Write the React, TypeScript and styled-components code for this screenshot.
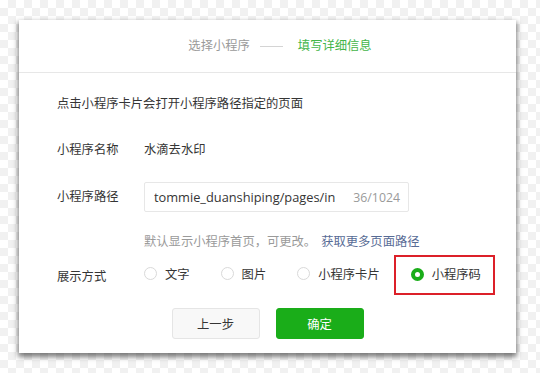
import React from 'react';
import styled, { createGlobalStyle } from 'styled-components';

const GlobalStyle = createGlobalStyle`
  html, body {
    margin: 0;
    padding: 0;
  }
  body {
    width: 540px;
    height: 373px;
    overflow: hidden;
    background-color: #ffffff;
    background-image: repeating-conic-gradient(#f1f1f1 0% 25%, #ffffff 0% 50%);
    background-size: 16px 16px;
    font-family: "Open Sans", "Noto Sans CJK SC", sans-serif;
    font-size: 12.3px;
    color: #353535;
  }
`;

const Dialog = styled.div`
  width: 497px;
  height: 333px;
  margin: 20px 0 0 19px;
  background: #ffffff;
  box-shadow: 0 3px 5px 1px rgba(0, 0, 0, 0.5);
  display: flex;
  flex-direction: column;
`;

const Steps = styled.div`
  height: 52px;
  border-bottom: 1px solid #e7e7e7;
  display: flex;
  align-items: center;
  justify-content: center;
  padding-left: 25px;
`;

const Step = styled.span<{ $active?: boolean }>`
  color: ${(p) => (p.$active ? '#44b549' : '#9a9a9a')};
  line-height: 20px;
`;

const StepLine = styled.span`
  width: 23px;
  height: 1px;
  background: #d4d4d4;
  margin: 1px 15px 0 10px;
`;

const Body = styled.div`
  padding: 21px 0 0 38px;
  display: flex;
  flex-direction: column;
`;

const Intro = styled.div`
  line-height: 20px;
`;

const Row = styled.div<{ $top: number }>`
  display: flex;
  align-items: center;
  margin-top: ${(p) => p.$top}px;
`;

const Label = styled.div`
  width: 87px;
  flex-shrink: 0;
  line-height: 20px;
`;

const Value = styled.div`
  line-height: 20px;
`;

const InputBox = styled.div`
  width: 246px;
  height: 28px;
  border: 1px solid #e7e7e7;
  border-radius: 2px;
  display: flex;
  align-items: center;
  padding: 0 8px 0 9px;
`;

const PathInput = styled.input`
  width: 181px;
  border: none;
  outline: none;
  padding: 0;
  font: inherit;
  font-size: 12.8px;
  color: #353535;
  background: transparent;
`;

const Counter = styled.span`
  margin-left: auto;
  color: #9a9a9a;
`;

const Hint = styled.div`
  margin: 20px 0 0 87px;
  line-height: 20px;
  color: #9a9a9a;
`;

const Link = styled.a`
  color: #576b95;
  text-decoration: none;
  margin-left: 5px;
`;

const Options = styled.div`
  display: flex;
  align-items: center;
  gap: 31px;
`;

const Option = styled.label<{ $marked?: boolean }>`
  position: relative;
  display: flex;
  align-items: center;
  gap: 8px;
  line-height: 20px;

  ${(p) =>
    p.$marked &&
    `
    &::after {
      content: '';
      position: absolute;
      top: -10px;
      bottom: -10px;
      left: -17px;
      right: -14px;
      border: 2px solid #dc2029;
    }
  `}
`;

const Radio = styled.span<{ $checked?: boolean }>`
  width: 13px;
  height: 13px;
  box-sizing: border-box;
  border-radius: 50%;
  border: ${(p) => (p.$checked ? '4px solid #1aad19' : '1px solid #d9d9d9')};
  background: #ffffff;
  margin-top: ${(p) => (p.$checked ? '-1px' : '-2px')};
`;

const OptionsRow = styled(Row)`
  height: 39px;
`;

const ModeLabel = styled(Label)`
  padding-top: 4px;
`;

const Actions = styled.div`
  display: flex;
  justify-content: center;
  gap: 16px;
  margin-top: 14px;
  margin-left: -38px;
`;

const Button = styled.button<{ $primary?: boolean }>`
  width: 88px;
  height: 31px;
  border-radius: 3px;
  font: inherit;
  cursor: pointer;
  border: 1px solid ${(p) => (p.$primary ? '#1aad19' : '#e5e5e5')};
  background: ${(p) => (p.$primary ? '#1aad19' : '#f8f8f8')};
  color: ${(p) => (p.$primary ? '#ffffff' : '#353535')};
`;

const modes = ['文字', '图片', '小程序卡片', '小程序码'];

export default function App() {
  return (
    <>
      <GlobalStyle />
      <Dialog>
        <Steps>
          <Step>选择小程序</Step>
          <StepLine />
          <Step $active>填写详细信息</Step>
        </Steps>
        <Body>
          <Intro>点击小程序卡片会打开小程序路径指定的页面</Intro>
          <Row $top={26}>
            <Label>小程序名称</Label>
            <Value>水滴去水印</Value>
          </Row>
          <Row $top={22}>
            <Label>小程序路径</Label>
            <InputBox>
              <PathInput defaultValue="tommie_duanshiping/pages/index/index" />
              <Counter>36/1024</Counter>
            </InputBox>
          </Row>
          <Hint>
            默认显示小程序首页，可更改。
            <Link href="#">获取更多页面路径</Link>
          </Hint>
          <OptionsRow $top={3}>
            <ModeLabel>展示方式</ModeLabel>
            <Options>
              {modes.map((m, i) => (
                <Option key={m} $marked={i === 3}>
                  <Radio $checked={i === 3} />
                  {m}
                </Option>
              ))}
            </Options>
          </OptionsRow>
          <Actions>
            <Button>上一步</Button>
            <Button $primary>确定</Button>
          </Actions>
        </Body>
      </Dialog>
    </>
  );
}
